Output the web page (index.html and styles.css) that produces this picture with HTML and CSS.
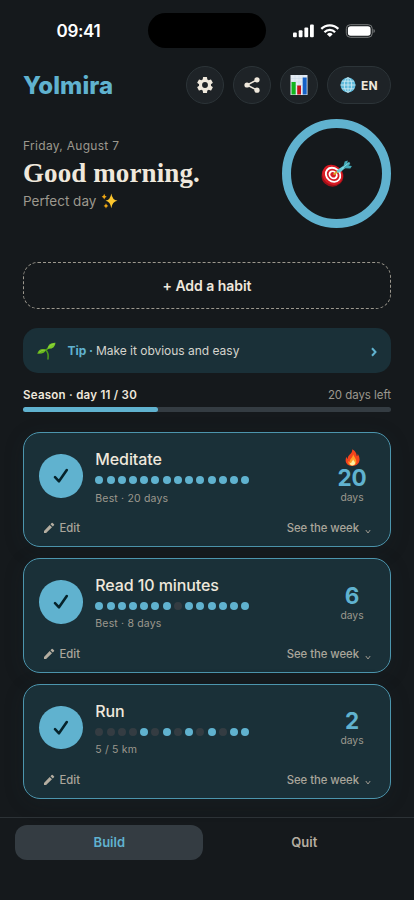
FILE: index.html
```html
<!DOCTYPE html>
<html lang="en">
<head>
<meta charset="utf-8">
<meta name="viewport" content="width=device-width, initial-scale=1">
<title>Yolmira</title>
<link rel="stylesheet" href="styles.css">
</head>
<body>
<svg class="defs" aria-hidden="true">
  <symbol id="check" viewBox="0 0 18 18"><path d="M3 10.2 7 14.3 14.8 3" fill="none" stroke="#06232b" stroke-width="2.6" stroke-linecap="round" stroke-linejoin="round"/></symbol>
  <symbol id="pencil" viewBox="0 0 24 24"><path fill="#b4ada0" d="M2 17.800V22H6.200L18 10.700 13.300 6zM22 6.700a1.400 1.400 0 0 0 0-2L19.300 2a1.400 1.400 0 0 0-2 0L14.900 4.400 19.600 9.100z"/></symbol>
  <symbol id="chev" viewBox="0 0 6 5"><path d="M.8 1 3 4 5.200 1" fill="none" stroke="#9c988e" stroke-width="1"/></symbol>
</svg>
<div class="phone">
  <div class="status">
    <span class="clock">09:41</span>
    <span class="island"></span>
    <svg class="signal" width="82" height="14" viewBox="0 0 82 14">
      <g fill="#fff"><rect x="0" y="8.500" width="3.800" height="4.700" rx="1"/><rect x="5.700" y="6.200" width="3.800" height="7" rx="1"/><rect x="11.400" y="3.500" width="3.800" height="9.700" rx="1"/><rect x="17" y=".5" width="3.800" height="12.700" rx="1"/></g>
      <g fill="none" stroke="#fff" stroke-width="2.300"><path d="M28.300 4.900a12 12 0 0 1 17 0"/><path d="M31.500 8.200a7.400 7.400 0 0 1 10.600 0"/></g>
      <path d="M36.800 13 33.900 10.200a4.200 4.200 0 0 1 5.800 0z" fill="#fff"/>
      <rect x="53.300" y=".7" width="26" height="12.600" rx="4" fill="none" stroke="#777a7b"/><rect x="54.900" y="2.300" width="22.700" height="9.400" rx="2.700" fill="#fff"/><path d="M80.500 5v4q1.400-.7 1.400-2t-1.400-2" fill="#777a7b"/>
    </svg>
  </div>
  <header class="top">
    <div class="brand">Yolmira</div>
    <div class="tools">
      <button class="tool" aria-label="Settings"><svg width="20" height="20" viewBox="0 0 24 24"><path fill="#efe8dc" d="M19.140 12.940c.04-.3.060-.61.060-.94s-.02-.64-.07-.94l2.030-1.580a.49.49 0 0 0 .12-.61l-1.920-3.320a.49.49 0 0 0-.59-.22l-2.390.96a7 7 0 0 0-1.620-.94l-.36-2.540a.48.48 0 0 0-.48-.41h-3.840a.47.47 0 0 0-.47.41l-.36 2.540c-.59.24-1.130.57-1.620.94l-2.390-.96a.48.48 0 0 0-.59.220L2.740 8.870a.47.47 0 0 0 .12.610l2.030 1.580a6 6 0 0 0 0 1.880l-2.030 1.580a.49.49 0 0 0-.12.610l1.920 3.320c.12.220.37.290.59.220l2.390-.96c.5.380 1.030.7 1.620.94l.36 2.540c.05.240.24.410.48.410h3.840c.24 0 .44-.17.470-.41l.36-2.540a7 7 0 0 0 1.620-.94l2.390.96c.22.080.47 0 .59-.22l1.920-3.320a.47.47 0 0 0-.12-.61zM12 15.500a3.500 3.500 0 1 1 0-7 3.500 3.500 0 0 1 0 7z"/></svg></button>
      <button class="tool" aria-label="Share"><svg width="16" height="16" viewBox="0 0 16 16"><path d="M13 2.800 3 8l10 5.200" fill="none" stroke="#efe8dc" stroke-width="1.500"/><g fill="#efe8dc"><circle cx="13" cy="2.800" r="2.600"/><circle cx="3" cy="8" r="2.600"/><circle cx="13" cy="13.200" r="2.600"/></g></svg></button>
      <button class="tool" aria-label="Stats"><svg width="18" height="20" viewBox="0 0 18 20"><path fill="#e4ebf3" d="M.5 0h17v20H.5z"/><path d="M1 3.500h16M1 7h16M1 10.500h16M1 14h16M5 0v20M9 0v20M13 0v20" stroke="#c6d5e5" stroke-width=".5"/><path fill="#12b51d" d="M1.500 7H5.700v12.500H1.500z"/><path fill="#c5141b" d="M7.200 10.500H11v9H7.200z"/><path fill="#1560c6" d="M12.700 2.500h4v17h-4z"/></svg></button>
      <button class="tool lang"><svg width="16" height="16" viewBox="0 0 16 16"><circle cx="8" cy="8" r="7.500" fill="#5fb9da"/><g fill="none" stroke="#d4edf4" stroke-width=".8"><ellipse cx="8" cy="8" rx="3.700" ry="7.300"/><path d="M8 .5v15M.5 8h15M1.800 4.200h12.400M1.800 11.800h12.400"/></g></svg><span>EN</span></button>
    </div>
  </header>
  <section class="hero">
    <div class="hello">
      <div class="date">Friday, August 7</div>
      <h1>Good morning.</h1>
      <div class="mood"><span>Perfect day</span><svg width="17" height="16" viewBox="0 0 17 16"><path fill="#fcc62d" d="M10.300.5q.9 6.400 6.200 7.300-5.300.9-6.200 7.400Q9.400 8.700 4.500 7.800 9.400 6.900 10.300.5"/><path fill="#f2a914" d="M3.200.8q.4 2.500 2.500 2.900-2.100.4-2.500 2.900Q2.800 4.100.7 3.700 2.800 3.300 3.200.8M5 10.200q.4 2.300 2.400 2.700Q5.400 13.300 5 15.600 4.600 13.300 2.600 12.900 4.600 12.500 5 10.200"/></svg></div>
    </div>
    <div class="ring"><svg width="33" height="28" viewBox="0 0 33 28"><ellipse cx="12.500" cy="16.200" rx="10.900" ry="10.500" fill="#9e1018"/><g transform="rotate(40 13 15)"><ellipse cx="12.500" cy="15.200" rx="10.800" ry="9.600" fill="#d81a23"/><ellipse cx="12.900" cy="14.800" rx="8.600" ry="7.400" fill="#fff"/><ellipse cx="13" cy="14.800" rx="6.800" ry="5.700" fill="#d51c26"/><ellipse cx="13" cy="14.800" rx="4.900" ry="4.100" fill="#fff"/><ellipse cx="13" cy="14.800" rx="2.900" ry="2.400" fill="#d51c26"/></g><path d="m13.500 14.500 5-3.400" stroke="#d9a520" stroke-width="1.800"/><path d="m17.300 12.800-.4-2.500 6.500-4.600 1.900 2.300-5 4.300z" fill="#65c9d5"/><path d="M23.300 6.600 24.700 1.600l3-1.100-.3 3.200 1.900-2 1 2.200-1.900 1.700 3.500.3-1.600 2.500-5.600-.1z" fill="#43a9b7"/><path d="m22 8.500 7-6" stroke="#9de9ed" stroke-width=".7"/></svg></div>
  </section>
  <button class="add">+ Add a habit</button>
  <div class="tip">
    <svg class="sprout" width="19" height="18" viewBox="0 0 19 18"><path d="M11 17Q11.800 11 9 8.200q2-1.600 3-3" fill="none" stroke="#4c9d19" stroke-width="1.500" stroke-linecap="round"/><path fill="#69b81d" d="M9.300 7.600Q7.600 12.300.3 11.700 1.900 5.300 9.300 7.600"/><path fill="#79c928" d="M10.500 6.700Q11 .4 18.500.7 18.100 7.300 10.500 6.700"/><path fill="none" stroke="#a3dc4e" stroke-width=".6" d="M2 10.500Q4 7.900 8 8.100M12 5.500Q13.500 2.500 17 2"/></svg>
    <p><b>Tip</b><i> · </i>Make it obvious and easy</p>
    <svg class="next" width="6" height="10" viewBox="0 0 6 10"><path d="m1 1.200 3.500 3.800L1 8.800" fill="none" stroke="#60b2cf" stroke-width="2"/></svg>
  </div>
  <div class="season"><b>Season · day 11 / 30</b><span>20 days left</span></div>
  <div class="bar"><div class="fill"></div></div>
  <main class="cards">
    <article class="card">
      <div class="main">
        <div class="done"><svg width="18" height="18"><use href="#check"/></svg></div>
        <div class="info"><h2>Meditate</h2>
          <div class="dots"><i></i><i></i><i></i><i></i><i></i><i></i><i></i><i></i><i></i><i></i><i></i><i></i><i></i><i></i></div>
          <small>Best · 20 days</small></div>
        <div class="streak"><svg width="15" height="17" viewBox="0 0 15 17"><path fill="#f4431d" d="M7.200.2C12.200 3 11.200 6 12 7.200q.8-.9.700-2.500c3.300 5 2.500 11.800-5 12.100C.9 16.900-.6 11.800 1.500 7.700q.3 1.700 1.300 2.200C2.300 5.500 7.800 5 7.200.2"/><path fill="#ff9d27" d="M8 5.200c1 2.500 3.600 4.800 3.400 7.900-.2 2.300-2 3.300-4 3.300-2.900 0-4.500-1.900-3.900-4.500l1.200 1.300C4.500 9.500 8 8.800 8 5.200"/><path fill="#fff1a4" d="M8 10.200c.4 1.600 2.300 2.500 2 4.300-.2 1.200-1.200 1.900-2.500 1.900-1.700 0-2.800-1-2.400-2.700l1 .6c.1-1.900 1.900-2.200 1.900-4.100"/></svg><strong>20</strong><span>days</span></div>
      </div>
      <div class="actions"><span class="edit"><svg width="12" height="12"><use href="#pencil"/></svg>Edit</span><span class="week">See the week<svg width="6" height="5"><use href="#chev"/></svg></span></div>
    </article>
    <article class="card">
      <div class="main">
        <div class="done"><svg width="18" height="18"><use href="#check"/></svg></div>
        <div class="info"><h2>Read 10 minutes</h2>
          <div class="dots"><i></i><i></i><i></i><i></i><i></i><i></i><i></i><i class="off"></i><i></i><i></i><i></i><i></i><i></i><i></i></div>
          <small>Best · 8 days</small></div>
        <div class="streak"><strong>6</strong><span>days</span></div>
      </div>
      <div class="actions"><span class="edit"><svg width="12" height="12"><use href="#pencil"/></svg>Edit</span><span class="week">See the week<svg width="6" height="5"><use href="#chev"/></svg></span></div>
    </article>
    <article class="card">
      <div class="main">
        <div class="done"><svg width="18" height="18"><use href="#check"/></svg></div>
        <div class="info"><h2>Run</h2>
          <div class="dots"><i class="off"></i><i class="off"></i><i class="off"></i><i class="off"></i><i></i><i class="off"></i><i></i><i class="off"></i><i></i><i class="off"></i><i></i><i class="off"></i><i></i><i></i></div>
          <small>5 / 5 km</small></div>
        <div class="streak"><strong>2</strong><span>days</span></div>
      </div>
      <div class="actions"><span class="edit"><svg width="12" height="12"><use href="#pencil"/></svg>Edit</span><span class="week">See the week<svg width="6" height="5"><use href="#chev"/></svg></span></div>
    </article>
  </main>
  <nav class="tabs"><span class="tab on">Build</span><span class="tab">Quit</span></nav>
</div>
</body>
</html>
```
FILE: styles.css
```css
* { box-sizing: border-box; }
body { margin: 0; background: #15191c; color: #efe8dc; font-family: Inter, "Liberation Sans", sans-serif; }
button { font: inherit; color: inherit; background: none; padding: 0; }
svg { display: block; flex: none; }
.defs { display: none; }
.phone { width: 414px; height: 900px; overflow: hidden; display: flex; flex-direction: column; background: #15191c; }
.phone > * { flex: none; }

.status { height: 66px; padding-top: 13px; display: grid; grid-template-columns: 148px 118px 148px; }
.clock { padding: 8px 0 0 56.500px; color: #fff; font-size: 17px; line-height: 20px; font-weight: 600; letter-spacing: -.3px; }
.island { height: 35px; border-radius: 18px; background: #000; }
.signal { margin: 11px 0 0 27px; }

.top { height: 38px; padding: 0 23px; display: flex; align-items: center; justify-content: space-between; }
.brand { color: #60b2cf; font-size: 24px; font-weight: 800; letter-spacing: .1px; }
.tools { display: flex; gap: 9px; }
.tool { width: 38px; height: 38px; border: 1px solid #2c3438; border-radius: 19px; background: #1e2327; display: flex; align-items: center; justify-content: center; }
.lang { width: 64px; gap: 5px; font-size: 12px; font-weight: 700; letter-spacing: .4px; }

.hero { margin-top: 15px; height: 109px; padding: 0 23px; display: flex; justify-content: space-between; }
.hello { padding-top: 18px; }
.date { font-size: 12px; line-height: 18px; letter-spacing: .3px; color: #9c988e; }
h1 { margin: 3px 0 0; font-family: "Liberation Serif", serif; font-size: 27px; line-height: 30px; font-weight: 700; letter-spacing: .1px; white-space: nowrap; }
.mood { margin-top: 4px; display: flex; align-items: center; gap: 5px; color: #9c988e; font-size: 13.500px; line-height: 18px; }
.ring { width: 109px; height: 109px; border: 9.500px solid #60b2cf; border-radius: 50%; display: flex; align-items: center; justify-content: center; }

.add { margin: 34px 23px 0; height: 47px; border: 1px dashed #9c988e; border-radius: 15px; font-size: 14px; font-weight: 600; letter-spacing: -.05px; text-align: center; }
.tip { margin: 19px 23px 0; height: 45px; padding: 0 14px; border-radius: 15px; background: #1a3038; display: flex; align-items: center; }
.tip p { margin: 0 auto 0 11.500px; color: #d5d4cd; font-size: 12px; letter-spacing: -.02px; }
.tip b, .tip i { color: #60b2cf; font-style: normal; font-weight: 700; }
.next { margin-top: 2px; }
.season { margin: 13px 23px 0; height: 18px; display: flex; justify-content: space-between; font-size: 11.500px; line-height: 18px; color: #9c988e; }
.season span { letter-spacing: -.05px; }
.season b { color: #efe8dc; font-weight: 600; letter-spacing: .26px; }
.bar { margin: 3px 23px 0; height: 5px; border-radius: 3px; background: #343c42; }
.fill { width: 36.667%; height: 5px; border-radius: 3px; background: #60b2cf; }

.cards { margin: 20.400px 23px 0; display: flex; flex-direction: column; gap: 11.200px; }
.card { height: 114.600px; border: 1px solid #4c95ad; border-radius: 17px; background: #1a3038; box-shadow: 0 4px 20px rgba(30, 50, 55, .18); }
.main { height: 80px; padding-left: 15px; display: flex; }
.done { margin-top: 21px; width: 43.500px; height: 43.500px; border-radius: 50%; background: #60b2cf; display: flex; align-items: center; justify-content: center; }
.info { margin-left: 12.800px; padding-top: 15px; }
h2 { margin: 0; font-size: 16px; line-height: 22px; font-weight: 500; letter-spacing: -.1px; white-space: nowrap; }
.dots { margin-top: 6px; display: flex; gap: 3.240px; }
.dots i { width: 8px; height: 8px; border-radius: 50%; background: #60b2cf; }
.dots .off { background: #343c42; }
small { display: block; margin-top: 6.300px; color: #9c988e; font-size: 10.500px; line-height: 16px; letter-spacing: .17px; }
.streak { margin: 0 11px 0 auto; width: 54px; display: flex; flex-direction: column; align-items: center; justify-content: center; padding-top: 8px; color: #60b2cf; }
.streak strong { font-size: 22.500px; line-height: 24px; font-weight: 700; letter-spacing: -.2px; }
.streak span { color: #9c988e; font-size: 10.300px; line-height: 15px; }
.actions { height: 30px; padding: 0 19px; display: flex; align-items: center; justify-content: space-between; color: #aaa69b; font-size: 11.300px; font-weight: 500; }
.edit, .week { display: flex; align-items: center; }
.edit { gap: 4.500px; }
.week { gap: 6px; letter-spacing: -.03px; }
.week svg { margin-top: 6px; }

.tabs { margin-top: 18.600px; height: 83px; border-top: 1px solid #2c3236; padding: 7px 15.400px; display: grid; grid-template-columns: 187.800px 187.800px; gap: 7.200px; }
.tab { height: 35px; border-radius: 12px; text-align: center; font-size: 13px; line-height: 35px; font-weight: 600; color: #b4ada0; }
.on { background: #343c42; color: #60b2cf; }
```
